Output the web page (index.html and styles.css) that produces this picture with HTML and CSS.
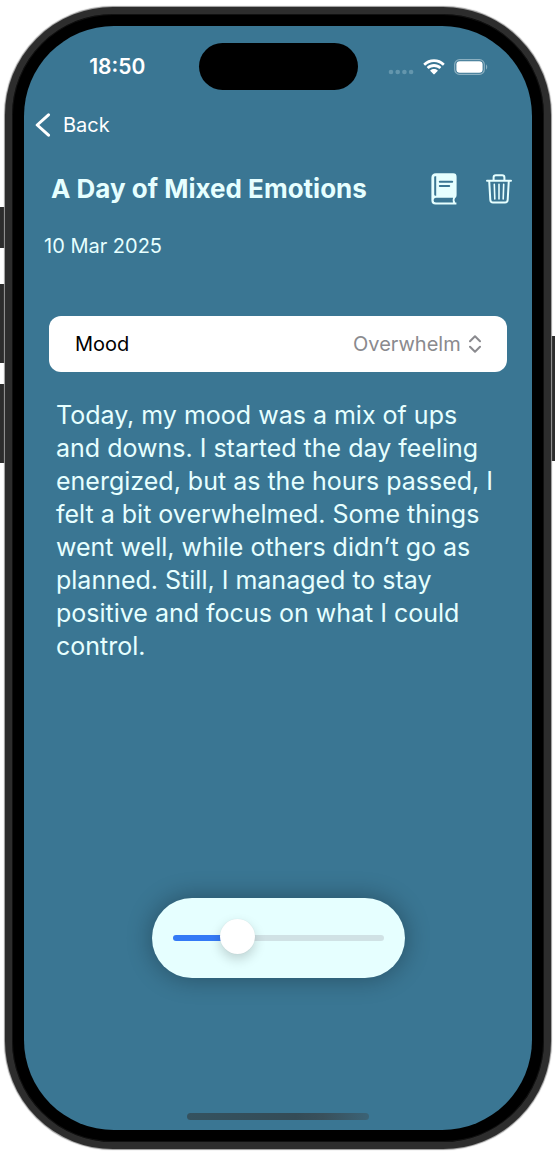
FILE: index.html
```html
<!DOCTYPE html>
<html lang="en">
<head>
<meta charset="utf-8">
<meta name="viewport" content="width=device-width, initial-scale=1">
<title>A Day of Mixed Emotions</title>
<link rel="stylesheet" href="styles.css">
</head>
<body>
<div class="stage">
  <span class="key key-action"></span>
  <span class="key key-up"></span>
  <span class="key key-down"></span>
  <span class="key key-power"></span>
  <div class="device">
    <div class="screen">
      <header class="status">
        <span class="clock">18:50</span>
        <span class="island"></span>
        <span class="indicators">
          <svg class="dots" width="26" height="6" viewBox="0 0 26 6"><circle cx="3" cy="3" r="2.3"/><circle cx="9.7" cy="3" r="2.3"/><circle cx="16.4" cy="3" r="2.3"/><circle cx="23.1" cy="3" r="2.3"/></svg>
          <svg class="wifi" width="22" height="16" viewBox="0 0 22 16"><path d="M11 0.2C6.900 0.200 3.200 1.800.5 4.400c-.2.2-.2.500 0 .7l1.300 1.300c.2.200.5.200.7 0C4.800 4.300 7.700 3 11 3s6.200 1.300 8.500 3.400c.2.200.5.200.7 0l1.300-1.300c.2-.2.200-.5 0-.7C18.800 1.800 15.100.2 11 .2z"/><path d="M11 5.100c-2.700 0-5.200 1-7 2.700-.2.200-.2.500 0 .7l1.300 1.300c.2.200.5.200.7 0C7.300 8.600 9.100 7.900 11 7.900s3.700.7 5 1.900c.2.200.5.200.7 0L18 8.500c.2-.2.200-.5 0-.7-1.800-1.700-4.300-2.700-7-2.700z"/><path d="M11 10c-1.400 0-2.600.5-3.600 1.300-.2.200-.2.500 0 .7l3.200 3.300c.2.200.6.200.8 0l3.200-3.300c.2-.2.200-.5 0-.7C13.600 10.500 12.400 10 11 10z"/></svg>
          <svg class="battery" width="34" height="16" viewBox="0 0 34 16"><rect class="shell" x=".7" y=".7" width="29.600" height="14.600" rx="4.800"/><rect x="2.400" y="2.300" width="26.200" height="11.400" rx="3.300"/><path class="cap" d="M32 5.500c1.600.6 1.600 4.400 0 5z"/></svg>
        </span>
      </header>

      <nav class="nav">
        <a class="back" href="#entries">
          <svg width="16" height="24" viewBox="0 0 16 24"><path d="M13.500 1.800L2.200 12l11.300 10.200"/></svg>
          Back
        </a>
      </nav>

      <main class="entry">
        <div class="heading">
          <h1 class="title">A Day of Mixed Emotions</h1>
          <button class="tool" type="button" aria-label="Journal">
            <svg width="26" height="32" viewBox="0 0 26 32"><path class="solid" fill-rule="evenodd" d="M5 .3H22.200Q25.600.3 25.600 3.700V22.300Q25.600 24.300 24 25.200Q22.500 27.200 24.200 29.600H25.400V31.500H4.500Q.4 31.500.4 27.500V4.800Q.4.300 5 .3zM4 3.200Q3.200 3.200 3.200 4.200V21.500Q3.300 22.700 4.500 22.700H5.200V3.200zM4.800 24.800Q2.600 25 2.600 27.200T4.900 29.500H22Q21.200 27.100 22.100 24.800z"/><path class="rule" d="M8.800 8.700H21.200M8.800 12.900H18.200"/></svg>
          </button>
          <button class="tool" type="button" aria-label="Delete">
            <svg class="bin" width="26" height="30" viewBox="0 0 26 30"><path d="M1 6.800H25M7.600 6.800V3.500Q7.600 1.200 9.900 1.200H16.100Q18.400 1.200 18.400 3.500V6.800M3.200 6.800L4.300 25.800Q4.500 28.600 7 28.600H19Q21.500 28.600 21.700 25.800L22.800 6.800"/><path class="thin" d="M8.300 10.300L8.800 25M13 10.300V25M17.700 10.300L17.200 25"/></svg>
          </button>
        </div>
        <time class="date" datetime="2025-03-10">10 Mar 2025</time>
        <div class="mood">
          <label for="mood">Mood</label>
          <span class="picker">
            <select id="mood">
              <option>Overwhelm</option>
            </select>
            <svg width="12" height="18" viewBox="0 0 12 18"><path d="M1 6.300L6 1.300l5 5M1 11.700l5 5 5-5"/></svg>
          </span>
        </div>
        <p class="note">Today, my mood was a mix of ups and downs. I started the day feeling energized, but as the hours passed, I felt a bit overwhelmed. Some things went well, while others didn’t go as planned. Still, I managed to stay positive and focus on what I could control.</p>
      </main>

      <div class="capsule">
        <input class="slider" type="range" min="0" max="100" value="27" aria-label="Mood level" style="--level: 31%">
      </div>
      <div class="home"></div>
    </div>
  </div>
</div>
</body>
</html>
```

FILE: styles.css
```css
* {
  box-sizing: border-box;
}

body {
  margin: 0;
  background: #fff;
  font-family: Inter, "Liberation Sans", sans-serif;
  color: #e6ffff;
}

svg {
  display: block;
  flex: none;
}

.stage {
  position: relative;
  display: flex;
  min-height: 100vh;
  padding: 7px 4px 4px 5px;
}

.key {
  position: absolute;
  left: 0;
  width: 6px;
  background: #2c2c2c;
}

.key-action {
  top: 207px;
  height: 41px;
}

.key-up {
  top: 284px;
  height: 79px;
}

.key-down {
  top: 384px;
  height: 79px;
}

.key-power {
  left: auto;
  right: 0;
  top: 336px;
  height: 125px;
}

.device {
  position: relative;
  display: flex;
  flex: 1;
  padding: 12px;
  border: 7px solid #2d2d2d;
  border-radius: 108px;
  background: #000;
  box-shadow: inset 0 0 0 1px #111, 0 0 1px 1px #9a9a9a;
}

.screen {
  display: flex;
  flex: 1;
  flex-direction: column;
  padding: 17px 0 10px;
  border-radius: 90px;
  background: #3a7693;
}

.status {
  display: grid;
  grid-template-columns: 1fr auto 1fr;
  align-items: center;
  color: #fff;
}

.clock {
  padding-left: 12px;
  font-size: 21px;
  font-weight: 600;
  text-align: center;
}

.island {
  width: 159px;
  height: 47px;
  border-radius: 24px;
  background: #000;
}

.indicators {
  display: flex;
  align-items: center;
  justify-content: center;
  gap: 9px;
  padding-right: 14px;
  fill: #fff;
}

.dots {
  margin-top: 11px;
  fill: #6496ad;
}

.shell {
  fill: none;
  stroke: #8bb0c1;
  stroke-width: 1.200;
}

.cap {
  fill: #8bb0c1;
}

.nav {
  display: flex;
  padding: 20px 11px 0;
}

.back {
  display: flex;
  align-items: center;
  gap: 12px;
  height: 30px;
  font-size: 20px;
  color: #fff;
  text-decoration: none;
}

.back svg {
  fill: none;
  stroke: #fff;
  stroke-width: 3;
  stroke-linecap: round;
  stroke-linejoin: round;
}

.entry {
  display: flex;
  flex: 1;
  flex-direction: column;
  padding: 31px 20px 0;
}

.heading {
  display: flex;
  align-items: center;
  gap: 29px;
  height: 36px;
  padding-left: 7px;
}

.title {
  flex: 1;
  margin: 0;
  font-size: 26px;
  font-weight: 700;
  line-height: 36px;
  white-space: nowrap;
}

.tool {
  padding: 0;
  border: 0;
  background: none;
}

.solid {
  fill: #e6ffff;
}

.rule {
  fill: none;
  stroke: #3a7693;
  stroke-width: 2;
  stroke-linecap: round;
}

.bin {
  fill: none;
  stroke: #e6ffff;
  stroke-width: 2;
  stroke-linecap: round;
  stroke-linejoin: round;
}

.thin {
  stroke-width: 1.600;
}

.date {
  margin-top: 24px;
  font-size: 20px;
  line-height: 30px;
}

.mood {
  display: flex;
  align-items: center;
  justify-content: space-between;
  height: 56px;
  margin: 55px 5px 0;
  padding: 0 26px;
  border-radius: 12px;
  background: #fff;
  font-size: 20px;
  color: #000;
}

.picker {
  display: flex;
  align-items: center;
  gap: 8px;
}

.picker select {
  appearance: none;
  padding: 0;
  border: 0;
  background: none;
  font: inherit;
  color: #8a8a8e;
}

.picker svg {
  fill: none;
  stroke: #8a8a8e;
  stroke-width: 2;
  stroke-linecap: round;
  stroke-linejoin: round;
}

.note {
  margin: 27px 12px 0;
  font-size: 25px;
  line-height: 33px;
}

.capsule {
  display: flex;
  align-items: center;
  align-self: center;
  height: 80px;
  margin-bottom: 135px;
  padding: 0 21px;
  border-radius: 40px;
  background: #e6ffff;
  box-shadow: 0 0 26px rgba(0, 0, 0, 0.33);
}

.slider {
  appearance: none;
  width: 211px;
  height: 36px;
  margin: 0;
  background: none;
}

.slider::-webkit-slider-runnable-track {
  height: 6px;
  border-radius: 3px;
  background: linear-gradient(to right, #347af6 var(--level), #d0e2e5 var(--level));
}

.slider::-webkit-slider-thumb {
  appearance: none;
  width: 35px;
  height: 35px;
  margin-top: -16px;
  border-radius: 50%;
  background: #fff;
  box-shadow: 0 5px 12px rgba(0, 0, 0, 0.18), 0 0 1px rgba(0, 0, 0, 0.1);
}

.home {
  align-self: center;
  width: 182px;
  height: 7px;
  border-radius: 4px;
  background: linear-gradient(to right, #34525f, #344b56 60%, #39505b 75%, #3b6376);
}
```
